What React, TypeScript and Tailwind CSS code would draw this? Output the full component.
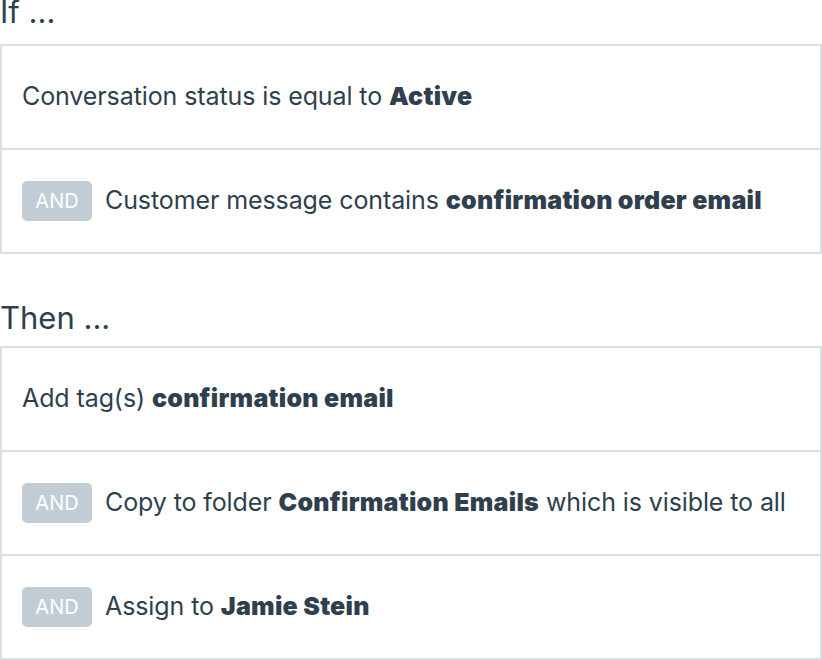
import React from "react";

const font = { fontFamily: "Inter, 'Noto Sans', sans-serif" };

function Badge() {
  return (
    <span className="inline-flex items-center justify-center w-[70px] h-[40px] rounded-[5px] bg-[#c2ccd5] text-white text-[20px] mr-[13px] shrink-0">
      AND
    </span>
  );
}

function B({ children }: { children: React.ReactNode }) {
  return <b className="font-black tracking-[0.25px]">{children}</b>;
}

function Row({ and, children, last }: { and?: boolean; children: React.ReactNode; last?: boolean }) {
  return (
    <div className={`flex items-center px-[20px] ${last ? "h-[102px]" : "h-[104px] border-b-2 border-[#d8dfe5]"}`}>
      {and && <Badge />}
      <span className="text-[25px] tracking-[-0.1px] text-[#2f3f4e] whitespace-nowrap">{children}</span>
    </div>
  );
}

export default function App() {
  return (
    <div className="w-[822px] h-[660px] bg-white overflow-hidden" style={font}>
      <div className="h-[44px] text-[31px] leading-[24px] text-[#2f3f4e]">If ...</div>
      <div className="border-2 border-[#d8dfe5]">
        <Row>
          Conversation status is equal to <B>Active</B>
        </Row>
        <Row and last>
          Customer message contains <B>confirmation order email</B>
        </Row>
      </div>
      <div className="h-[92px] pt-[53px] text-[31px] leading-[21px] text-[#2f3f4e]">Then ...</div>
      <div className="border-2 border-[#d8dfe5]">
        <Row>
          Add tag(s) <B>confirmation email</B>
        </Row>
        <Row and>
          Copy to folder <B>Confirmation Emails</B> which is visible to all
        </Row>
        <Row and last>
          Assign to <B>Jamie Stein</B>
        </Row>
      </div>
    </div>
  );
}
